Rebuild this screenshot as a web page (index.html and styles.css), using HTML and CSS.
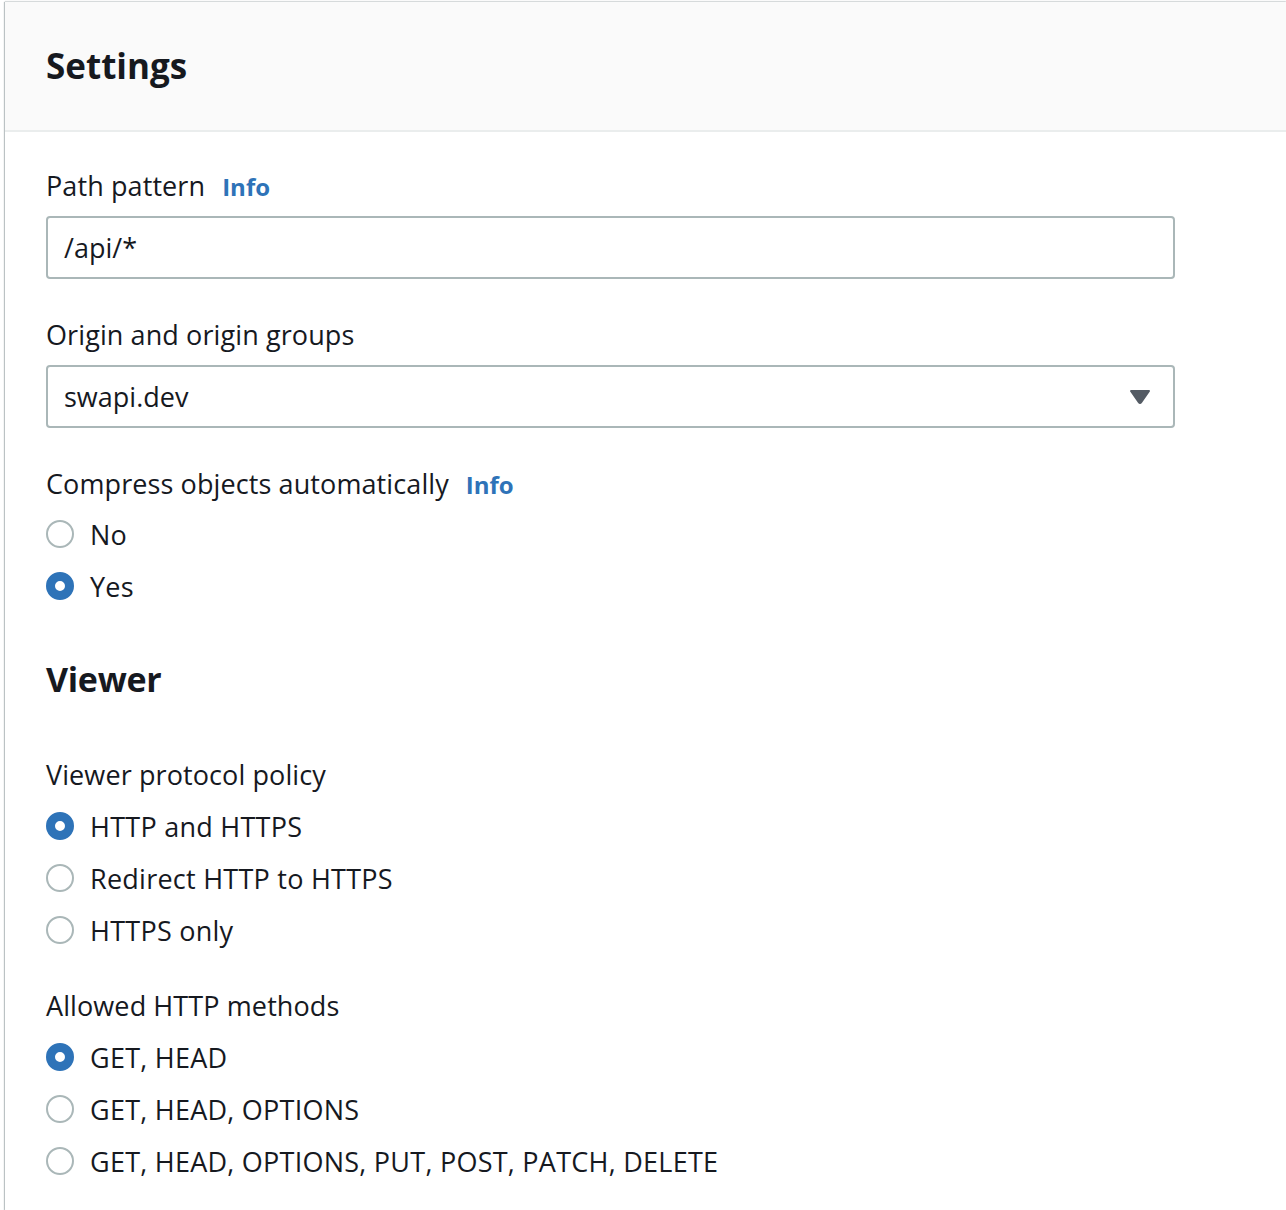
FILE: index.html
```html
<!DOCTYPE html>
<html>
<head>
<meta charset="utf-8">
<link rel="stylesheet" href="styles.css">
</head>
<body>
<div class="card">
  <div class="card-header">
    <h1 class="title">Settings</h1>
  </div>
  <div class="card-body">
    <div class="field">
      <div class="label">Path pattern <a class="info">Info</a></div>
      <div class="input">/api/*</div>
    </div>
    <div class="field">
      <div class="label">Origin and origin groups</div>
      <div class="input select">
        <span>swapi.dev</span>
        <svg class="caret" width="22" height="16" viewBox="0 0 22 16"><path d="M2 2 H20 L12.2 13.2 Q11 14.8 9.8 13.2 Z" fill="#545b64" stroke="#545b64" stroke-width="2" stroke-linejoin="round"/></svg>
      </div>
    </div>
    <div class="field">
      <div class="label">Compress objects automatically <a class="info">Info</a></div>
      <div class="radios">
        <div class="radio"><span class="dot"></span>No</div>
        <div class="radio"><span class="dot on"></span>Yes</div>
      </div>
    </div>
    <h2 class="section">Viewer</h2>
    <div class="field">
      <div class="label">Viewer protocol policy</div>
      <div class="radios wide">
        <div class="radio"><span class="dot on"></span>HTTP and HTTPS</div>
        <div class="radio"><span class="dot"></span>Redirect HTTP to HTTPS</div>
        <div class="radio"><span class="dot"></span>HTTPS only</div>
      </div>
    </div>
    <div class="field">
      <div class="label">Allowed HTTP methods</div>
      <div class="radios wide">
        <div class="radio"><span class="dot on"></span>GET, HEAD</div>
        <div class="radio"><span class="dot"></span>GET, HEAD, OPTIONS</div>
        <div class="radio"><span class="dot"></span>GET, HEAD, OPTIONS, PUT, POST, PATCH, DELETE</div>
      </div>
    </div>
  </div>
</div>
</body>
</html>
```
FILE: styles.css
```css
html, body {
  margin: 0;
  padding: 0;
  background: #ffffff;
}
body {
  font-family: "Open Sans", "Noto Sans", Arial, sans-serif;
  color: #16191f;
  overflow: hidden;
  height: 1210px;
}
.card {
  margin: 2px 0 0 5px;
  background: #ffffff;
  box-shadow: 0 -1px 1px 0 rgba(0, 28, 36, 0.12), -1px 0 1px 0 rgba(0, 28, 36, 0.25);
  height: 1208px;
  overflow: hidden;
}
.card-header {
  height: 128px;
  background: #fafafa;
  border-bottom: 2px solid #eaeded;
  display: flex;
  align-items: center;
  padding-left: 41px;
}
.title {
  margin: 0;
  font-size: 35px;
  font-weight: 700;
  line-height: 48px;
}
.card-body {
  padding: 34px 0 0 41px;
  display: flex;
  flex-direction: column;
}
.field {
  display: flex;
  flex-direction: column;
  margin-bottom: 36px;
}
.label {
  font-size: 27px;
  line-height: 40px;
  height: 40px;
  display: flex;
  align-items: baseline;
  gap: 17px;
  letter-spacing: 0.1px;
}
.info {
  color: #2e73b8;
  font-size: 24px;
  font-weight: 700;
  letter-spacing: 0;
}
.input {
  margin-top: 10px;
  width: 1129px;
  height: 63px;
  box-sizing: border-box;
  border: 2px solid #aab7b8;
  border-radius: 4px;
  font-size: 27px;
  display: flex;
  align-items: center;
  padding: 0 16px;
}
.select {
  justify-content: space-between;
  padding-right: 22px;
}
.caret {
  display: block;
}
.radios {
  margin-top: 4px;
  display: flex;
  flex-direction: column;
}
.radios.wide {
  margin-top: 5px;
}
.radio {
  height: 52px;
  display: flex;
  align-items: center;
  font-size: 27px;
  gap: 16px;
  letter-spacing: 0.25px;
}
.dot {
  width: 28px;
  height: 28px;
  box-sizing: border-box;
  border: 2px solid #aab7b8;
  border-radius: 50%;
  background: #ffffff;
  flex: none;
}
.dot.on {
  border: 9px solid #2e73b8;
}
.field:has(.radios) {
  margin-bottom: 30px;
}
.section {
  margin: 13px 0 52px;
  font-size: 34px;
  font-weight: 700;
  line-height: 48px;
  letter-spacing: -0.3px;
}
```
